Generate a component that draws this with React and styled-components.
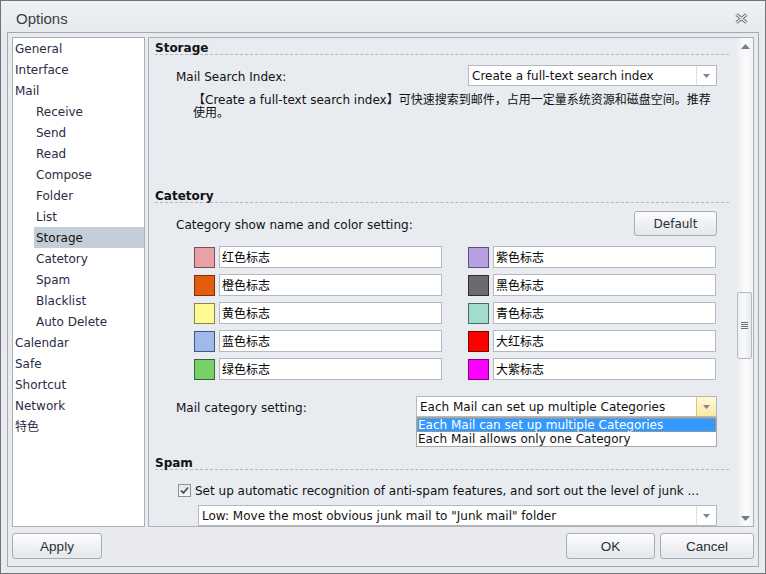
import styled, { createGlobalStyle } from "styled-components";

const GlobalStyle = createGlobalStyle`
  html, body {
    margin: 0;
    padding: 0;
  }
  body {
    font-family: "DejaVu Sans", "Noto Sans CJK SC", Verdana, sans-serif;
    font-size: 12px;
    color: #1f2a3b;
  }
  * {
    box-sizing: border-box;
  }
`;

const Window = styled.div`
  width: 766px;
  height: 574px;
  border: 1px solid #6f747b;
  background: linear-gradient(#eff1f4, #e7eaee 32px, #e9ebee);
  display: flex;
  flex-direction: column;
  padding: 0 6px 6px;
`;

const TitleBar = styled.div`
  height: 31px;
  display: flex;
  align-items: center;
  justify-content: space-between;
  padding: 3px 11px 0 9px;
  font-family: "Liberation Sans", Arial, sans-serif;
  font-size: 15px;
  color: #3a3d42;
`;

const Frame = styled.div`
  flex: 1;
  border: 1px solid #a4a9b0;
  padding: 4px 4px 7px;
  display: flex;
  flex-direction: column;
`;

const Main = styled.div`
  height: 490px;
  display: flex;
  gap: 3px;
`;

const Nav = styled.ul`
  width: 133px;
  margin: 0;
  padding: 0;
  list-style: none;
  background: #fff;
  border: 1px solid #a9b0b9;
  color: #2a2c44;
`;

const NavItem = styled.li`
  height: 21px;
  line-height: 23px;
  margin-left: ${(p) => p.$level * 21}px;
  padding-left: 2px;
  background: ${(p) => (p.$active ? "#c3ced9" : "transparent")};
  color: ${(p) => (p.$active ? "#111" : "inherit")};
  white-space: nowrap;
`;

const Panel = styled.div`
  flex: 1;
  display: flex;
  border: 1px solid #a9b0b9;
  background: #e8ebf0;
  overflow: hidden;
`;

const Content = styled.div`
  flex: 1;
  padding: 1px 8px 0 6px;
  overflow: hidden;
`;

const Heading = styled.div`
  margin-top: ${(p) => p.$top || 0}px;
  padding-top: 4px;
  line-height: 11px;
  font-weight: bold;
  color: #111;
  border-bottom: 1px dashed #b3b7bd;
`;

const Row = styled.div`
  position: relative;
  display: flex;
  align-items: center;
  justify-content: space-between;
  height: ${(p) => p.$h || 21}px;
  margin-top: ${(p) => p.$top || 0}px;
  padding: 0 12px 0 21px;
`;

const Label = styled.span`
  padding-top: 2px;
  color: #111;
`;

const Description = styled.p`
  margin: 8px 0 0 38px;
  width: 523px;
  line-height: 13px;
  color: #111;
`;

const Select = styled.div`
  position: relative;
  display: flex;
  width: ${(p) => p.$w}px;
  height: 21px;
  background: #fff;
  border: 1px solid #b4b9c0;
  margin-left: ${(p) => p.$indent || 0}px;
`;

const SelectText = styled.div`
  flex: 1;
  padding: 1px 0 0 3px;
  line-height: 19px;
  white-space: nowrap;
  overflow: hidden;
  color: #111;
`;

const SelectArrow = styled.div`
  width: 20px;
  display: flex;
  align-items: center;
  justify-content: center;
  border-left: 1px solid ${(p) => (p.$hot ? "#e2c36a" : "#dde0e4")};
  background: ${(p) => (p.$hot ? "linear-gradient(#fff8d6, #fce9a6)" : "#fff")};
`;

const DropList = styled.ul`
  position: absolute;
  left: -1px;
  top: 20px;
  width: 301px;
  margin: 0;
  padding: 0;
  list-style: none;
  background: #fff;
  border: 1px solid #a3a9b0;
  z-index: 2;
`;

const DropOption = styled.li`
  height: 14px;
  line-height: 15px;
  padding-left: 1px;
  white-space: nowrap;
  color: ${(p) => (p.$selected ? "#fff" : "#111")};
  background: ${(p) => (p.$selected ? "#3399ff" : "transparent")};
  outline: ${(p) => (p.$selected ? "1px dotted #d99a3a" : "none")};
  outline-offset: -1px;
`;

const Button = styled.button`
  height: ${(p) => p.$h || 26}px;
  width: ${(p) => p.$w}px;
  padding: 0;
  border: 1px solid #a8adb4;
  border-radius: 3px;
  background: linear-gradient(#fdfdfe, #eef0f3 55%, #e4e7eb);
  color: #2b2e33;
  font-family: ${(p) =>
    p.$plain ? `"DejaVu Sans", sans-serif` : `"Liberation Sans", Arial, sans-serif`};
  font-size: ${(p) => (p.$plain ? 12 : 13.5)}px;
`;

const ColorGrid = styled.div`
  display: grid;
  grid-template-columns: 248px 248px;
  column-gap: 26px;
  row-gap: 6px;
  margin: 10px 0 0 39px;
`;

const ColorRow = styled.div`
  display: flex;
  align-items: center;
  gap: 4px;
  height: 22px;
`;

const Swatch = styled.span`
  width: 21px;
  height: 21px;
  background: ${(p) => p.$color};
  border: 1px solid ${(p) => p.$edge};
`;

const NameInput = styled.div`
  flex: 1;
  height: 22px;
  line-height: 19px;
  padding-left: 2px;
  background: #fff;
  border: 1px solid #b5bac1;
  font-family: "Noto Sans CJK SC", sans-serif;
  color: #000;
`;

const CheckRow = styled.div`
  display: flex;
  align-items: center;
  gap: 4px;
  height: 16px;
  margin: 12px 0 0 23px;
  white-space: nowrap;
  color: #111;
`;

const CheckBox = styled.span`
  width: 13px;
  height: 13px;
  display: flex;
  align-items: center;
  justify-content: center;
  border: 1px solid #8e9196;
  background: linear-gradient(#e4e6e9, #f6f7f8);
`;

const Scrollbar = styled.div`
  width: 16px;
  display: flex;
  flex-direction: column;
  background: linear-gradient(to right, #eceef1, #fbfbfc 55%, #f1f2f4);
`;

const ScrollArrow = styled.div`
  height: 16px;
  display: flex;
  align-items: center;
  justify-content: center;
`;

const Track = styled.div`
  flex: 1;
  position: relative;
`;

const Thumb = styled.div`
  position: absolute;
  left: 0;
  width: 15px;
  height: 67px;
  border: 1px solid #b6bac0;
  border-radius: 2px;
  background: linear-gradient(to right, #eef0f2, #f8f9fa 50%, #e6e8eb);
  display: flex;
  flex-direction: column;
  align-items: center;
  justify-content: center;
  gap: 1px;
`;

const Grip = styled.span`
  width: 7px;
  height: 1px;
  background: #6c7075;
`;

const Footer = styled.div`
  display: flex;
  gap: 5px;
  margin-top: 6px;
`;

const Spacer = styled.div`
  flex: 1;
`;

const navItems = [
  ["General", 0],
  ["Interface", 0],
  ["Mail", 0],
  ["Receive", 1],
  ["Send", 1],
  ["Read", 1],
  ["Compose", 1],
  ["Folder", 1],
  ["List", 1],
  ["Storage", 1],
  ["Catetory", 1],
  ["Spam", 1],
  ["Blacklist", 1],
  ["Auto Delete", 1],
  ["Calendar", 0],
  ["Safe", 0],
  ["Shortcut", 0],
  ["Network", 0],
  ["特色", 0],
];

const categories = [
  ["红色标志", "#e8a1a5", "#7c4d51"],
  ["紫色标志", "#b6a0e0", "#5f4a82"],
  ["橙色标志", "#e25d0f", "#7d2f0a"],
  ["黑色标志", "#6b6b6b", "#2f2f2f"],
  ["黄色标志", "#fffb94", "#86864e"],
  ["青色标志", "#a3dcca", "#466e60"],
  ["蓝色标志", "#a0b9e8", "#435682"],
  ["大红标志", "#ff0000", "#7e0000"],
  ["绿色标志", "#78d068", "#356632"],
  ["大紫标志", "#ff00ff", "#800080"],
];

const Arrow = ({ up, color = "#777b81" }) => (
  <svg width="9" height="5" viewBox="0 0 9 5">
    <path d={up ? "M0 5 L4.5 0 L9 5 Z" : "M0 0 L9 0 L4.5 5 Z"} fill={color} />
  </svg>
);

const SmallArrow = () => (
  <svg width="7" height="4" viewBox="0 0 7 4">
    <path d="M0 0 L7 0 L3.5 4 Z" fill="#80858b" />
  </svg>
);

const CloseIcon = () => (
  <svg width="13" height="11" viewBox="0 0 13 11">
    <path d="M1.5 1.5 L11.5 9.5 M11.5 1.5 L1.5 9.5" stroke="#6b6f75" strokeWidth="3.4" />
    <path d="M1.5 1.5 L11.5 9.5 M11.5 1.5 L1.5 9.5" stroke="#eceef1" strokeWidth="1.4" />
  </svg>
);

const CheckMark = () => (
  <svg width="9" height="9" viewBox="0 0 9 9">
    <path d="M1 4.5 L3.5 7 L8 1.5" stroke="#4f5257" strokeWidth="1.8" fill="none" />
  </svg>
);

const Dropdown = ({ value, width, hot, indent, children }) => (
  <Select $w={width} $indent={indent}>
    <SelectText>{value}</SelectText>
    <SelectArrow $hot={hot}>
      <SmallArrow />
    </SelectArrow>
    {children}
  </Select>
);

export default function App() {
  return (
    <>
      <GlobalStyle />
      <Window>
        <TitleBar>
          <span>Options</span>
          <CloseIcon />
        </TitleBar>
        <Frame>
          <Main>
            <Nav>
              {navItems.map(([label, level]) => (
                <NavItem key={label} $level={level} $active={label === "Storage"}>
                  {label}
                </NavItem>
              ))}
            </Nav>
            <Panel>
              <Content>
                <Heading>Storage</Heading>
                <Row $top={10}>
                  <Label>Mail Search Index:</Label>
                  <Dropdown value="Create a full-text search index" width={249} />
                </Row>
                <Description>
                  【Create a full-text search index】可快速搜索到邮件，占用一定量系统资源和磁盘空间。推荐使用。
                </Description>

                <Heading $top={67}>Catetory</Heading>
                <Row $top={8} $h={25}>
                  <Label>Category show name and color setting:</Label>
                  <Button $w={83} $h={25} $plain>
                    Default
                  </Button>
                </Row>
                <ColorGrid>
                  {categories.map(([name, color, edge]) => (
                    <ColorRow key={name}>
                      <Swatch $color={color} $edge={edge} />
                      <NameInput>{name}</NameInput>
                    </ColorRow>
                  ))}
                </ColorGrid>
                <Row $top={16}>
                  <Label>Mail category setting:</Label>
                  <Dropdown value="Each Mail can set up multiple Categories" width={301} hot>
                    <DropList>
                      <DropOption $selected>Each Mail can set up multiple Categories</DropOption>
                      <DropOption>Each Mail allows only one Category</DropOption>
                    </DropList>
                  </Dropdown>
                </Row>

                <Heading $top={37}>Spam</Heading>
                <CheckRow>
                  <CheckBox>
                    <CheckMark />
                  </CheckBox>
                  <Label>Set up automatic recognition of anti-spam features, and sort out the level of junk ...</Label>
                </CheckRow>
                <Row $top={7}>
                  <Dropdown
                    value={'Low: Move the most obvious junk mail to "Junk mail" folder'}
                    width={519}
                    indent={22}
                  />
                </Row>
              </Content>
              <Scrollbar>
                <ScrollArrow>
                  <Arrow up />
                </ScrollArrow>
                <Track>
                  <Thumb style={{ top: 238 }}>
                    <Grip />
                    <Grip />
                    <Grip />
                    <Grip />
                  </Thumb>
                </Track>
                <ScrollArrow>
                  <Arrow />
                </ScrollArrow>
              </Scrollbar>
            </Panel>
          </Main>
          <Footer>
            <Button $w={90}>Apply</Button>
            <Spacer />
            <Button $w={89}>OK</Button>
            <Button $w={94}>Cancel</Button>
          </Footer>
        </Frame>
      </Window>
    </>
  );
}
